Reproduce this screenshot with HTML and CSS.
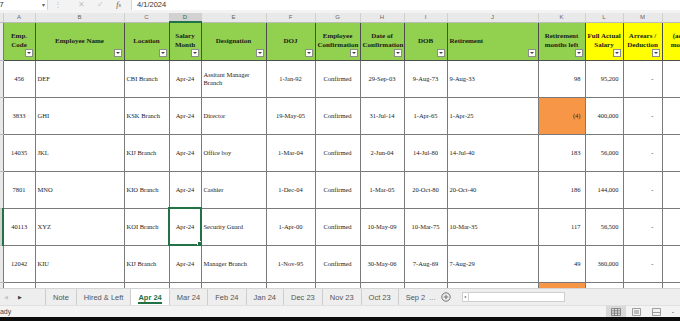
FILE: index.html
```html
<!DOCTYPE html>
<html lang="en">
<head>
  <meta charset="UTF-8" />
  <meta name="viewport" content="width=device-width, initial-scale=1.0" />
  <title>Salary Sheet - Apr 24</title>
  <link rel="stylesheet" href="styles.css">
</head>
<body>
  <div class="formula-bar">
    <div class="name-box"><span class="cell-ref">F7</span><span class="caret">&#9662;</span></div>
    <div class="grip">&#8942;</div>
    <div class="fx-buttons">
      <span class="off">&#10005;</span>
      <span class="off">&#10003;</span>
      <span class="fx"><i>f</i><sub>x</sub></span>
    </div>
    <div class="formula">4/1/2024</div>
  </div>

  <div class="sheet">
    <table class="grid">
      <colgroup>
        <col class="w-rh">
        <col class="w-a"><col class="w-b"><col class="w-c"><col class="w-d"><col class="w-e">
        <col class="w-f"><col class="w-g"><col class="w-h"><col class="w-i"><col class="w-j">
        <col class="w-k"><col class="w-l"><col class="w-m"><col class="w-n">
      </colgroup>
      <tr class="letters">
        <th class="rh"></th>
        <th>A</th><th>B</th><th>C</th><th class="cur">D</th><th>E</th><th>F</th><th>G</th>
        <th>H</th><th>I</th><th>J</th><th>K</th><th>L</th><th>M</th><th>N</th>
      </tr>
      <tr class="head">
        <td class="rh"></td>
        <th class="hdr">Emp.<br>Code<i class="flt"></i></th>
        <th class="hdr">Employee Name<i class="flt"></i></th>
        <th class="hdr">Location<i class="flt"></i></th>
        <th class="hdr">Salary<br>Month<i class="flt"></i></th>
        <th class="hdr">Designation<i class="flt"></i></th>
        <th class="hdr">DOJ<i class="flt"></i></th>
        <th class="hdr">Employee<br>Confirmation<i class="flt"></i></th>
        <th class="hdr">Date of<br>Confirmation<i class="flt"></i></th>
        <th class="hdr">DOB<i class="flt"></i></th>
        <th class="hdr left">Retirement<i class="flt"></i></th>
        <th class="hdr">Retirement<br>months left<i class="flt"></i></th>
        <th class="hdr yellow">Full Actual<br>Salary<i class="flt"></i></th>
        <th class="hdr yellow">Arrears /<br>Deduction<i class="flt"></i></th>
        <th class="hdr yellow">(actual<br>months)</th>
      </tr>
      <tr>
        <td class="rh"></td>
        <td class="ctr">456</td><td>DEF</td><td>CBI Branch</td><td class="ctr">Apr-24</td>
        <td class="wrap">Assitant Manager Branch</td><td class="ctr">1-Jan-92</td><td class="ctr">Confirmed</td>
        <td class="ctr">29-Sep-03</td><td class="ctr">9-Aug-73</td><td>9-Aug-33</td>
        <td class="num">98</td><td class="num">95,200</td><td class="dash">-</td><td></td>
      </tr>
      <tr>
        <td class="rh"></td>
        <td class="ctr">3833</td><td>GHI</td><td>KSK Branch</td><td class="ctr">Apr-24</td>
        <td>Director</td><td class="ctr">19-May-05</td><td class="ctr">Confirmed</td>
        <td class="ctr">31-Jul-14</td><td class="ctr">1-Apr-65</td><td>1-Apr-25</td>
        <td class="num orange">(4)</td><td class="num">400,000</td><td class="dash">-</td><td></td>
      </tr>
      <tr>
        <td class="rh"></td>
        <td class="ctr">14035</td><td>JKL</td><td>KIJ Branch</td><td class="ctr">Apr-24</td>
        <td>Office boy</td><td class="ctr">1-Mar-04</td><td class="ctr">Confirmed</td>
        <td class="ctr">2-Jun-04</td><td class="ctr">14-Jul-80</td><td>14-Jul-40</td>
        <td class="num">183</td><td class="num">56,000</td><td class="dash">-</td><td></td>
      </tr>
      <tr>
        <td class="rh"></td>
        <td class="ctr">7801</td><td>MNO</td><td>KIO Branch</td><td class="ctr">Apr-24</td>
        <td>Cashier</td><td class="ctr">1-Dec-04</td><td class="ctr">Confirmed</td>
        <td class="ctr">1-Mar-05</td><td class="ctr">20-Oct-80</td><td>20-Oct-40</td>
        <td class="num">186</td><td class="num">144,000</td><td class="dash">-</td><td></td>
      </tr>
      <tr>
        <td class="rh sel"></td>
        <td class="ctr">40113</td><td>XYZ</td><td>KOI Branch</td><td class="ctr active">Apr-24</td>
        <td>Security Guard</td><td class="ctr">1-Apr-00</td><td class="ctr">Confirmed</td>
        <td class="ctr">10-May-09</td><td class="ctr">10-Mar-75</td><td>10-Mar-35</td>
        <td class="num">117</td><td class="num">56,500</td><td class="dash">-</td><td></td>
      </tr>
      <tr>
        <td class="rh"></td>
        <td class="ctr">12042</td><td>KIU</td><td>KIJ Branch</td><td class="ctr">Apr-24</td>
        <td>Manager Branch</td><td class="ctr">1-Nov-95</td><td class="ctr">Confirmed</td>
        <td class="ctr">30-May-06</td><td class="ctr">7-Aug-69</td><td>7-Aug-29</td>
        <td class="num">49</td><td class="num">360,000</td><td class="dash">-</td><td></td>
      </tr>
      <tr>
        <td class="rh"></td>
        <td></td><td></td><td></td><td></td><td></td><td></td><td></td>
        <td></td><td></td><td></td><td class="orange"></td><td></td><td></td><td></td>
      </tr>
    </table>
  </div>

  <div class="tabbar">
    <div class="tab-nav"><span class="off">&#9664;</span><span>&#9654;</span></div>
    <div class="tab">Note</div>
    <div class="tab">Hired &amp; Left</div>
    <div class="tab active"><span>Apr 24</span></div>
    <div class="tab">Mar 24</div>
    <div class="tab">Feb 24</div>
    <div class="tab">Jan 24</div>
    <div class="tab">Dec 23</div>
    <div class="tab">Nov 23</div>
    <div class="tab">Oct 23</div>
    <div class="tab clip">Sep 2</div>
    <div class="more">...</div>
    <div class="add">
      <svg width="10" height="10" viewBox="0 0 10 10"><circle cx="5" cy="5" r="4.2" fill="none" stroke="#666" stroke-width="0.9"/><path d="M5 2.8v4.4M2.8 5h4.4" stroke="#666" stroke-width="0.9"/></svg>
    </div>
    <div class="hscroll">
      <span class="arrow">&#9666;</span>
      <span class="track"></span>
    </div>
  </div>

  <div class="status">
    <span class="ready">Ready</span>
    <div class="views">
      <span class="view on">
        <svg width="10" height="8" viewBox="0 0 10 8"><path d="M0.5 0.5h9v7h-9zM0.5 2.8h9M0.5 5.2h9M3.5 0.5v7M6.5 0.5v7" fill="none" stroke="#777" stroke-width="0.8"/></svg>
      </span>
      <span class="view">
        <svg width="9" height="8" viewBox="0 0 9 8"><path d="M0.5 0.5h8v7h-8z" fill="none" stroke="#888" stroke-width="0.8"/><path d="M2 2h5v4h-5z" fill="#bbb"/></svg>
      </span>
      <span class="view">
        <svg width="9" height="8" viewBox="0 0 9 8"><path d="M0.5 0.5h8v7h-8zM0.5 4.5h8" fill="none" stroke="#888" stroke-width="0.8"/></svg>
      </span>
      <span class="zoom-out">-</span>
    </div>
  </div>
  <div class="taskbar"></div>
</body>
</html>
```
FILE: styles.css
```css
* {
  box-sizing: border-box;
}
body {
  margin: 0;
  width: 680px;
  height: 321px;
  overflow: hidden;
  background: #fff;
  font-family: "Liberation Serif", serif;
  display: flex;
  flex-direction: column;
}

/* formula bar */
.formula-bar {
  height: 13px;
  flex: none;
  display: flex;
  padding-bottom: 3px;
  background: #f3f3f3;
  font-family: "Liberation Sans", sans-serif;
  font-size: 7.5px;
  color: #333;
  line-height: 10px;
}
.name-box {
  width: 48px;
  background: #fff;
  border-right: 1px solid #d6d6d6;
  display: flex;
  justify-content: space-between;
  overflow: hidden;
}
.cell-ref {
  margin-left: -5px;
}
.caret {
  color: #666;
  font-size: 6px;
  margin-right: 2px;
}
.grip {
  width: 20px;
  text-align: center;
  color: #bbb;
}
.fx-buttons {
  width: 63px;
  display: flex;
  justify-content: space-around;
  padding: 0 4px;
  color: #555;
}
.fx-buttons .off {
  color: #c3c3c3;
}
.fx i {
  font-family: "Liberation Serif", serif;
  font-size: 8px;
}
.fx sub {
  font-size: 5px;
  vertical-align: 0;
}
.formula {
  flex: 1;
  background: #fff;
  border-left: 1px solid #d6d6d6;
  padding-left: 5px;
}

/* worksheet grid */
.sheet {
  height: 275px;
  flex: none;
  overflow: hidden;
}
.grid {
  border-collapse: collapse;
  table-layout: fixed;
  width: 704px;
}
.w-rh { width: 3px; }
.w-a { width: 32px; }
.w-b { width: 89px; }
.w-c { width: 45px; }
.w-d { width: 32px; }
.w-e { width: 65px; }
.w-f { width: 49px; }
.w-g { width: 45px; }
.w-h { width: 44px; }
.w-i { width: 43px; }
.w-j { width: 91px; }
.w-k { width: 47px; }
.w-l { width: 38px; }
.w-m { width: 39px; }
.w-n { width: 42px; }

.letters th {
  height: 9px;
  padding: 0;
  background: #e9e9e9;
  border-right: 1px solid #d0d0d0;
  border-bottom: 1px solid #bcbcbc;
  font-family: "Liberation Sans", sans-serif;
  font-size: 6px;
  font-weight: normal;
  line-height: 8px;
  color: #666;
}
.letters th.cur {
  background: #d2d2d2;
  color: #217346;
  border-bottom: 2px solid #217346;
}
.rh {
  background: #e9e9e9;
  border-right: 1px solid #bcbcbc;
  padding: 0;
}
.rh.sel {
  background: #d2d2d2;
  border-right: 2px solid #217346;
}

.grid td {
  height: 37px;
  padding: 0 2px;
  border: 1px solid #7a7a7a;
  font-size: 6.5px;
  color: #222;
  white-space: nowrap;
  overflow: hidden;
}
.grid td.rh {
  border-top: none;
  border-bottom: 1px solid #bcbcbc;
  border-left: none;
}
.head td.rh {
  height: 38px;
}
.hdr {
  position: relative;
  height: 38px;
  padding: 0 2px;
  background: #92d050;
  border: 1px solid #4d4d4d;
  font-size: 7px;
  font-weight: bold;
  line-height: 9px;
  color: #1a1a1a;
  text-align: center;
  white-space: nowrap;
  overflow: hidden;
}
.hdr.left {
  text-align: left;
}
.hdr.yellow {
  background: #ffff00;
}
.flt {
  position: absolute;
  right: 2px;
  bottom: 3px;
  width: 8px;
  height: 8px;
  background: #fff;
  border: 1px solid #8c8c8c;
}
.flt::after {
  content: "";
  position: absolute;
  left: 1.5px;
  top: 2.5px;
  border-left: 2px solid transparent;
  border-right: 2px solid transparent;
  border-top: 2px solid #444;
}

.grid td.ctr {
  text-align: center;
}
.grid td.num {
  text-align: right;
  padding-right: 4px;
}
.grid td.dash {
  text-align: right;
  padding-right: 8px;
}
.grid td.wrap {
  white-space: normal;
  line-height: 8px;
}
.grid td.orange {
  background: #f79646;
}
.grid td.active {
  position: relative;
  outline: 2px solid #217346;
  outline-offset: -1px;
}
.grid td.active::after {
  content: "";
  position: absolute;
  right: -3px;
  bottom: -3px;
  width: 5px;
  height: 5px;
  background: #217346;
  border: 1px solid #fff;
}

/* sheet tabs */
.tabbar {
  height: 17px;
  flex: none;
  display: flex;
  align-items: stretch;
  background: #eeeeee;
  border-top: 1px solid #d4d4d4;
  font-family: "Liberation Sans", sans-serif;
  font-size: 7.5px;
  color: #555;
}
.tab-nav {
  width: 45px;
  display: flex;
  align-items: center;
  gap: 10px;
  padding-left: 4px;
  font-size: 5px;
  color: #444;
}
.tab-nav .off {
  color: #c4c4c4;
}
.tab {
  display: flex;
  align-items: center;
  padding: 0 7px;
  border-left: 1px solid #cdcdcd;
}
.tab.active {
  background: #fff;
  color: #217346;
  font-weight: bold;
}
.tab.active span {
  padding-top: 2px;
  border-bottom: 2px solid #217346;
}
.tab.clip {
  padding-right: 2px;
}
.more {
  display: flex;
  align-items: center;
  padding: 0 2px;
  color: #777;
}
.add {
  display: flex;
  align-items: center;
  padding: 0 3px;
}
.hscroll {
  margin-left: 8px;
  display: flex;
  align-items: center;
}
.hscroll .arrow {
  width: 7px;
  height: 10px;
  background: #fff;
  border: 1px solid #cfcfcf;
  font-size: 4px;
  line-height: 8px;
  text-align: center;
  color: #666;
}
.hscroll .track {
  width: 96px;
  height: 10px;
  background: #fff;
  border: 1px solid #cfcfcf;
  border-left: none;
}

/* status bar */
.status {
  height: 12px;
  flex: none;
  display: flex;
  align-items: center;
  justify-content: space-between;
  background: #f3f3f3;
  border-top: 1px solid #e0e0e0;
  font-family: "Liberation Sans", sans-serif;
  font-size: 7px;
  color: #444;
  overflow: hidden;
}
.ready {
  margin-left: -9px;
}
.views {
  display: flex;
  align-items: center;
  height: 100%;
}
.view {
  width: 20px;
  height: 100%;
  display: flex;
  align-items: center;
  justify-content: center;
}
.view.on {
  background: #d9d9d9;
}
.zoom-out {
  width: 14px;
  text-align: center;
  color: #555;
}
.taskbar {
  flex: 1;
  background: #0c0c0c;
}
```
